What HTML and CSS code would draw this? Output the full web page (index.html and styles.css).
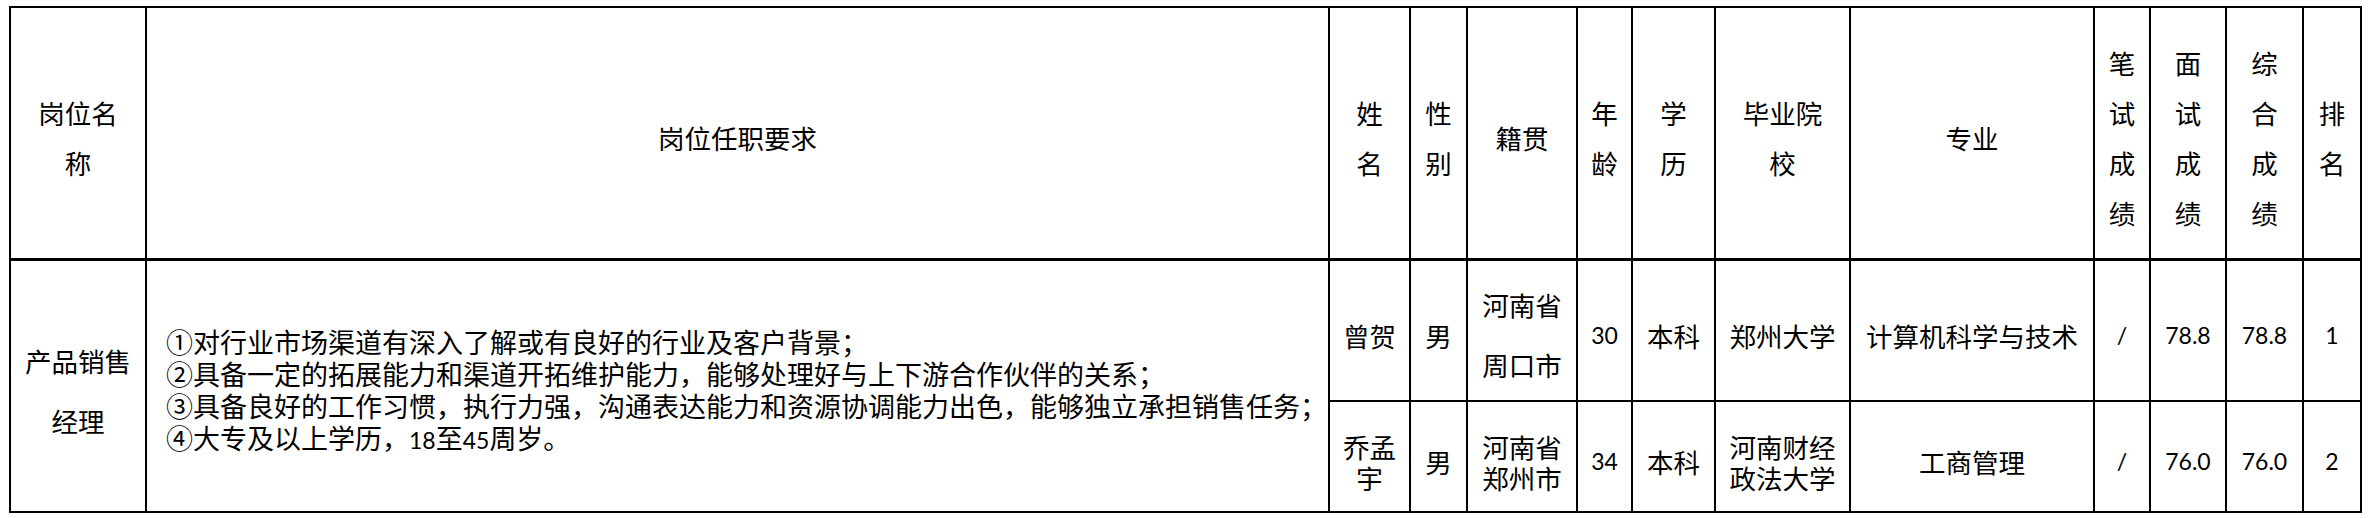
FILE: index.html
```html
<!DOCTYPE html>
<html lang="zh-CN">
<head>
<meta charset="utf-8">
<title>岗位招聘成绩表</title>
<link rel="stylesheet" href="styles.css">
</head>
<body>
<div class="sheet">
<table class="grid">
  <colgroup>
    <col class="c-post">
    <col class="c-req">
    <col class="c-name">
    <col class="c-sex">
    <col class="c-origin">
    <col class="c-age">
    <col class="c-edu">
    <col class="c-school">
    <col class="c-major">
    <col class="c-written">
    <col class="c-interview">
    <col class="c-total">
    <col class="c-rank">
  </colgroup>
  <thead>
    <tr class="head-row">
      <th>岗位名<br>称</th>
      <th>岗位任职要求</th>
      <th>姓<br>名</th>
      <th>性<br>别</th>
      <th>籍贯</th>
      <th>年<br>龄</th>
      <th>学<br>历</th>
      <th>毕业院<br>校</th>
      <th>专业</th>
      <th>笔<br>试<br>成<br>绩</th>
      <th>面<br>试<br>成<br>绩</th>
      <th>综<br>合<br>成<br>绩</th>
      <th>排<br>名</th>
    </tr>
  </thead>
  <tbody>
    <tr class="row-a">
      <td rowspan="2" class="wide-lines">产品销售<br>经理</td>
      <td rowspan="2" class="req">①对行业市场渠道有深入了解或有良好的行业及客户背景；<br>②具备一定的拓展能力和渠道开拓维护能力，能够处理好与上下游合作伙伴的关系；<br>③具备良好的工作习惯，执行力强，沟通表达能力和资源协调能力出色，能够独立承担销售任务；<br>④大专及以上学历，<span class="num">18</span>至<span class="num">45</span>周岁。</td>
      <td>曾贺</td>
      <td>男</td>
      <td class="wide-lines">河南省<br>周口市</td>
      <td class="num">30</td>
      <td>本科</td>
      <td>郑州大学</td>
      <td>计算机科学与技术</td>
      <td class="num">/</td>
      <td class="num">78.8</td>
      <td class="num">78.8</td>
      <td class="num">1</td>
    </tr>
    <tr class="row-b">
      <td>乔孟<br>宇</td>
      <td>男</td>
      <td>河南省<br>郑州市</td>
      <td class="num">34</td>
      <td>本科</td>
      <td>河南财经<br>政法大学</td>
      <td>工商管理</td>
      <td class="num">/</td>
      <td class="num">76.0</td>
      <td class="num">76.0</td>
      <td class="num">2</td>
    </tr>
  </tbody>
</table>
</div>
</body>
</html>
```

FILE: styles.css
```css
html, body {
  margin: 0;
  background: #ffffff;
}

.sheet {
  padding: 6px 0 0 9px;
}

.grid {
  border-collapse: collapse;
  table-layout: fixed;
  width: 2351px;
  font-family: "Noto Sans CJK SC", sans-serif;
  font-size: 26.5px;
  color: #000000;
}

.c-post { width: 136px; }
.c-req { width: 1183px; }
.c-name { width: 81px; }
.c-sex { width: 57px; }
.c-origin { width: 110px; }
.c-age { width: 55px; }
.c-edu { width: 83px; }
.c-school { width: 135px; }
.c-major { width: 244px; }
.c-written { width: 56px; }
.c-interview { width: 76px; }
.c-total { width: 77px; }
.c-rank { width: 58px; }

.grid th,
.grid td {
  border: 2px solid #000000;
  padding: 10px 0 0 0;
  text-align: center;
  vertical-align: middle;
  font-weight: normal;
  line-height: 31px;
  white-space: nowrap;
}

.head-row { height: 252px; }
.head-row th {
  line-height: 50px;
  border-bottom-width: 3px;
}

.row-a { height: 142px; }
.row-b { height: 111px; }

.grid td.wide-lines {
  line-height: 60px;
}

.grid td.req {
  text-align: left;
  padding-left: 19px;
  font-size: 27px;
  line-height: 32px;
}

.num {
  font-family: "Lato", "Noto Sans CJK SC", sans-serif;
  font-size: 23px;
}
```
